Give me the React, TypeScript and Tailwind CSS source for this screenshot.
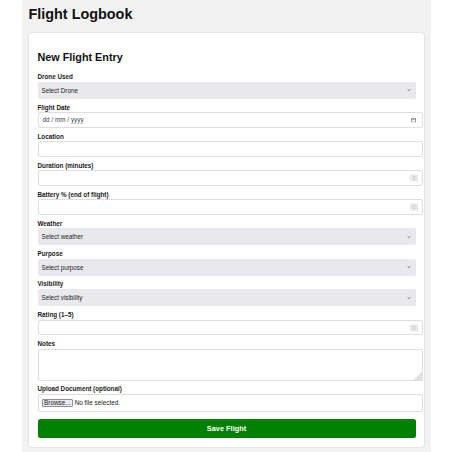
import React from "react";

function Label({ children }: { children: React.ReactNode }) {
  return (
    <label className="mb-[1.6px] block text-[6.3px] font-bold leading-[7.2px] text-[#1a1a1a]">
      {children}
    </label>
  );
}

function SelectField({ text }: { text: string }) {
  return (
    <div className="relative mb-[4.7px] flex h-[17px] w-[378px] items-center rounded-[2px] bg-[#e9e9ed] pl-[4px] text-[6.3px] text-[#1b1b1b]">
      <span>{text}</span>
      <svg
        className="absolute right-[4.5px] top-1/2 -translate-y-1/2"
        width="4"
        height="3"
        viewBox="0 0 4 3"
      >
        <path d="M0.6 0.8 L2 2.2 L3.4 0.8" fill="none" stroke="#555" strokeWidth="0.7" />
      </svg>
    </div>
  );
}

function Spinner() {
  return (
    <span className="absolute right-[4px] top-1/2 flex h-[7px] w-[8px] -translate-y-1/2 items-center justify-center rounded-[1px] bg-[#e9e9ed]">
      <svg width="4" height="5" viewBox="0 0 4 5">
        <path d="M1 1.8 L2 0.8 L3 1.8" fill="none" stroke="#8a8a8a" strokeWidth="0.5" />
        <path d="M1 3.2 L2 4.2 L3 3.2" fill="none" stroke="#8a8a8a" strokeWidth="0.5" />
      </svg>
    </span>
  );
}

function TextField({ spinner }: { spinner?: boolean }) {
  return (
    <div className="relative mb-[4.7px] h-[15.5px] w-[385px] rounded-[2px] border border-[#dedede] bg-white">
      {spinner ? <Spinner /> : null}
    </div>
  );
}

export default function App() {
  return (
    <div className="min-h-[452px] bg-white font-['Liberation_Sans',Arial,sans-serif] text-[#111]">
      <div className="mx-auto min-h-[452px] w-[409px] bg-[#f2f2f2] px-[7px] pt-[5.5px]">
        <h1 className="mb-[11px] text-[14.4px] font-bold leading-[16.6px] text-[#111]">
          Flight Logbook
        </h1>
        <div className="rounded-[3px] bg-white pb-[9px] pl-[9px] pr-[8px] pt-[18px] shadow-[0_0_2px_rgba(0,0,0,0.18)]">
          <h2 className="mb-[9.6px] text-[10.8px] font-bold leading-[12.4px] text-[#111]">
            New Flight Entry
          </h2>

          <Label>Drone Used</Label>
          <SelectField text="Select Drone" />

          <Label>Flight Date</Label>
          <div className="relative mb-[4.7px] flex h-[15.5px] w-[385px] items-center rounded-[2px] border border-[#dedede] bg-white pl-[4px] text-[6.4px] text-[#444]">
            <span>dd / mm / yyyy</span>
            <svg
              className="absolute right-[6px] top-1/2 -translate-y-1/2"
              width="5"
              height="5"
              viewBox="0 0 5 5"
            >
              <rect x="0.5" y="0.8" width="4" height="3.7" rx="0.4" fill="none" stroke="#555" strokeWidth="0.55" />
              <line x1="0.5" y1="1.7" x2="4.5" y2="1.7" stroke="#555" strokeWidth="0.6" />
            </svg>
          </div>

          <Label>Location</Label>
          <TextField />

          <Label>Duration (minutes)</Label>
          <TextField spinner />

          <Label>Battery % (end of flight)</Label>
          <TextField spinner />

          <Label>Weather</Label>
          <SelectField text="Select weather" />

          <Label>Purpose</Label>
          <SelectField text="Select purpose" />

          <Label>Visibility</Label>
          <SelectField text="Select visibility" />

          <Label>Rating (1–5)</Label>
          <TextField spinner />

          <Label>Notes</Label>
          <div className="relative mb-[4.7px] h-[32px] w-[385px] rounded-[2px] border border-[#dedede] bg-white">
            <svg className="absolute bottom-[0px] right-[0px]" width="8" height="8" viewBox="0 0 8 8">
              <path d="M8 0.5 L0.5 8 M8 2.5 L2.5 8 M8 4.5 L4.5 8 M8 6.5 L6.5 8" stroke="#9a9a9a" strokeWidth="0.6" />
            </svg>
          </div>

          <Label>Upload Document (optional)</Label>
          <div className="mb-[7.2px] flex h-[18px] w-[385px] items-center rounded-[2px] border border-[#dedede] bg-white pl-[3.5px] text-[6.4px] text-[#1b1b1b]">
            <span className="flex h-[8px] items-center rounded-[1px] border border-[#8f8f9d] bg-[#e9e9ed] px-[1px]">
              Browse...
            </span>
            <span className="ml-[2px]">No file selected.</span>
          </div>

          <button className="flex h-[18.3px] w-[378px] items-center justify-center rounded-[2.5px] bg-[#008000] text-[7.4px] font-bold text-white">
            Save Flight
          </button>
        </div>
      </div>
    </div>
  );
}
